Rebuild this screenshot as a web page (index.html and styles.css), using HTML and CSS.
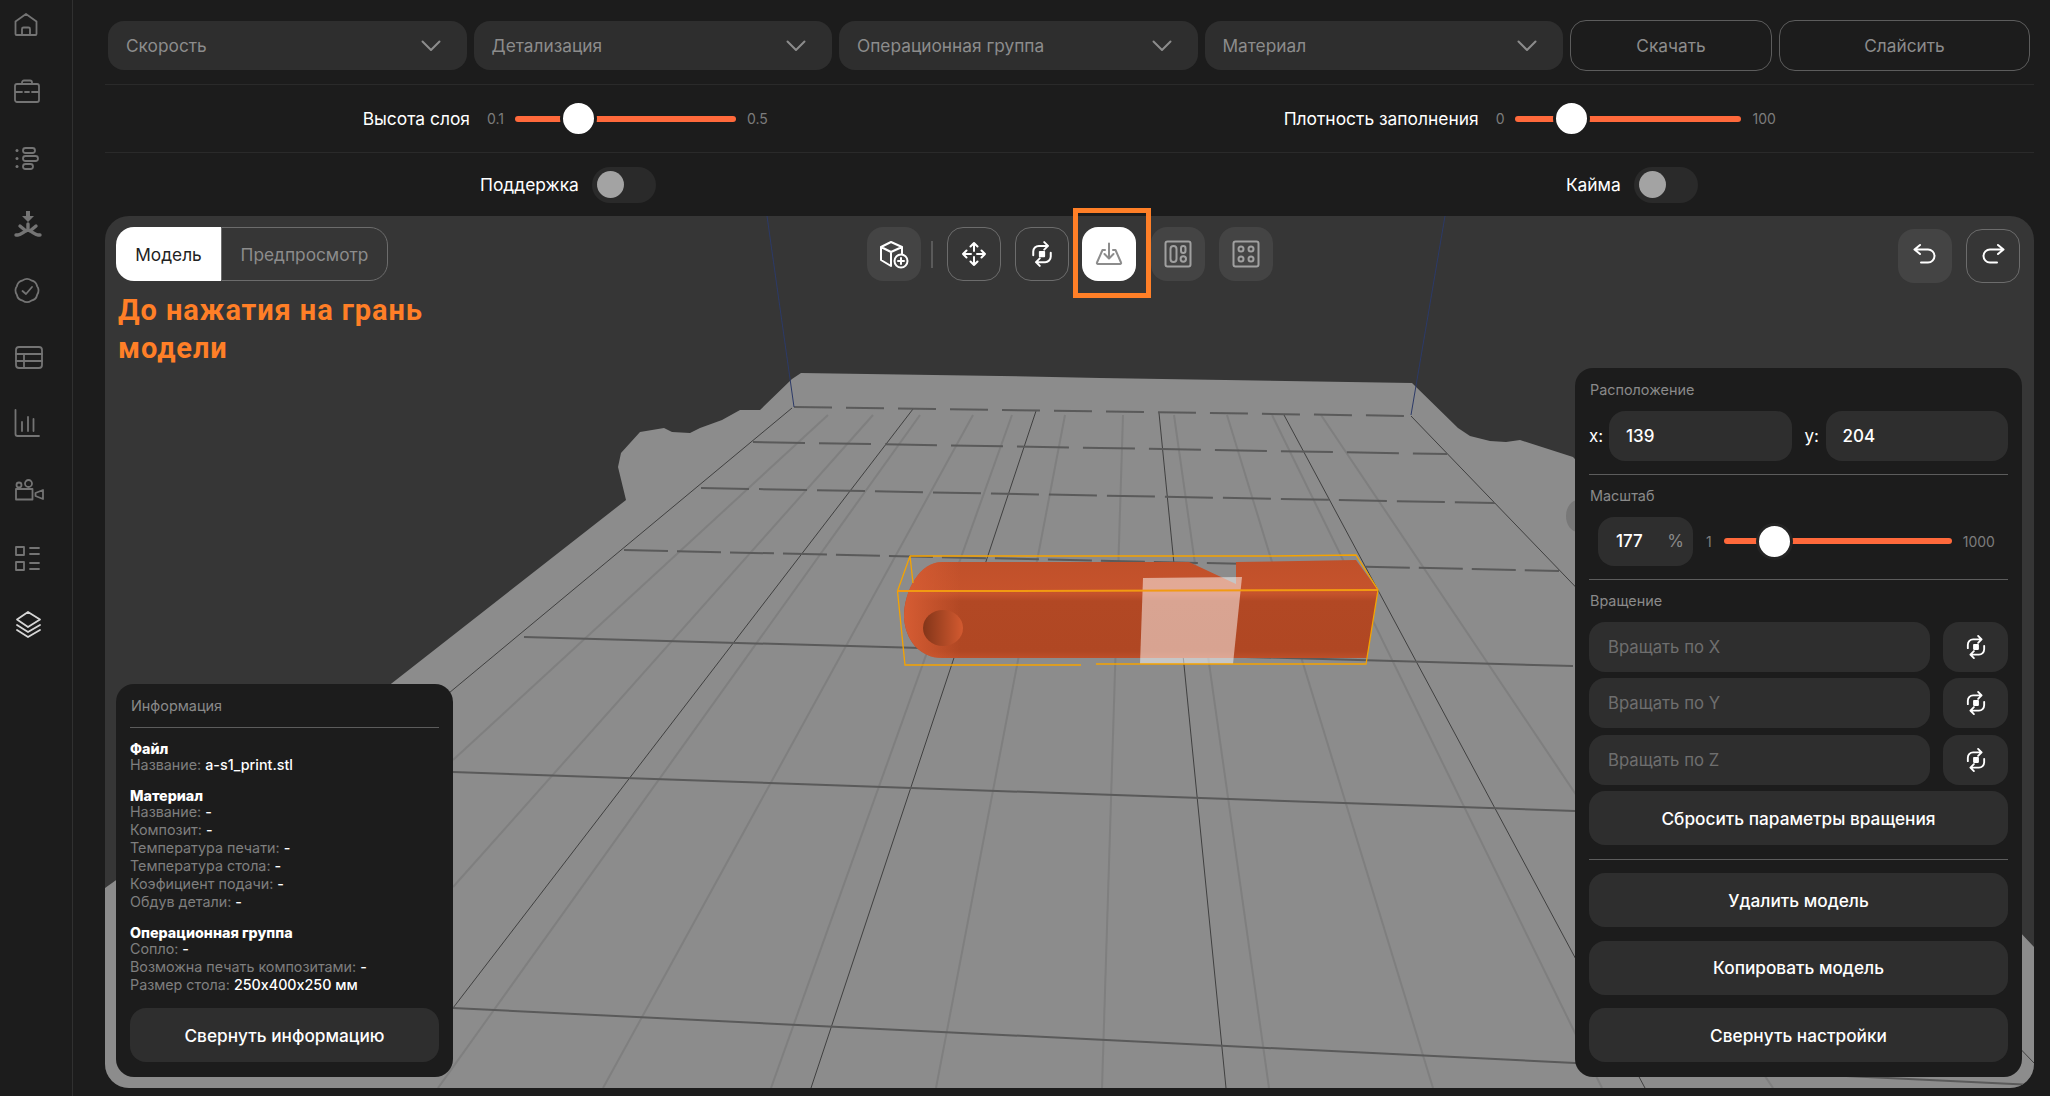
FILE: index.html
```html
<!DOCTYPE html>
<html lang="ru">
<head>
<meta charset="utf-8">
<title>Слайсер</title>
<link rel="stylesheet" href="styles.css">
</head>
<body>
<svg class="defs" width="0" height="0" aria-hidden="true">
  <symbol id="i-rotate" viewBox="0 0 24 24">
    <path d="M5 13V10a4.500 4.500 0 0 1 4.500-4.500H16M13.800 2.500l3 3-3 3M19 11v3a4.500 4.500 0 0 1-4.500 4.500H8M10.200 15.500l-3 3 3 3" fill="none" stroke="currentColor" stroke-width="1.600" stroke-linecap="round" stroke-linejoin="round"/>
    <rect x="9.500" y="9.500" width="5" height="5" rx=".7" fill="currentColor"/>
  </symbol>
  <symbol id="i-chev" viewBox="0 0 20 12">
    <path d="M1.500 1.500 10 10l8.500-8.500" fill="none" stroke="currentColor" stroke-width="2" stroke-linecap="round" stroke-linejoin="round"/>
  </symbol>
</svg>

<div class="app">
  <aside class="sidebar">
    <svg class="nav-icon" viewBox="0 0 34 34"><path d="M5.500 13.500 16 6l10.500 7.500V26a1 1 0 0 1-1 1h-19a1 1 0 0 1-1-1ZM12 27v-6a1.500 1.500 0 0 1 1.500-1.500h5A1.500 1.500 0 0 1 20 21v6"/></svg>
    <svg class="nav-icon" viewBox="0 0 34 34"><path d="M5 11a2 2 0 0 1 2-2h20a2 2 0 0 1 2 2v14a2 2 0 0 1-2 2H7a2 2 0 0 1-2-2ZM12 9V7.500a2 2 0 0 1 2-2h6a2 2 0 0 1 2 2V9M5 17h7M15 17h4M22 17h7"/></svg>
    <svg class="nav-icon" viewBox="0 0 34 34"><circle cx="7" cy="9.500" r="1.500" class="fill"/><circle cx="7" cy="17.500" r="1.500" class="fill"/><circle cx="7" cy="25.500" r="1.500" class="fill"/><rect x="13" y="7" width="12" height="5" rx="2.500"/><rect x="13" y="15" width="15" height="5" rx="2.500"/><rect x="13" y="23" width="10" height="5" rx="2.500"/></svg>
    <svg class="nav-icon" viewBox="0 0 34 34"><path class="fill" d="M16 3h4v5h4l-6 6-6-6h4Z"/><path class="thick" d="M18 16v6M6 27h2c3 0 5-3 10-5 5 2 7 5 10 5h2M10 18l6 5M26 18l-6 5"/></svg>
    <svg class="nav-icon" viewBox="0 0 34 34"><path d="M27.160 20.710Q26.190 25.690 21.210 26.660 17 29.500 12.790 26.660 7.810 25.690 6.840 20.710 4 16.500 6.840 12.290 7.810 7.310 12.790 6.340 17 3.500 21.210 6.340 26.190 7.310 27.160 12.290 30 16.500 27.160 20.710Z"/><path d="m12.500 17 3.500 3 6-7"/></svg>
    <svg class="nav-icon" viewBox="0 0 34 34"><rect x="6" y="6" width="26" height="21" rx="3"/><path d="M6 13h26M6 20h26M14 13v14"/></svg>
    <svg class="nav-icon" viewBox="0 0 34 34"><path d="M5.500 3v24a2 2 0 0 0 2 2H29M12 24v-9M18 24V10M23.500 24v-12"/></svg>
    <svg class="nav-icon" viewBox="0 0 34 34"><circle cx="9" cy="11" r="2.500"/><circle cx="18.500" cy="9.500" r="3.500"/><rect x="6" y="15" width="16.500" height="10.500"/><path d="M25.500 19 33 16v9l-7.500-3Z"/></svg>
    <svg class="nav-icon" viewBox="0 0 34 34"><rect x="6" y="7" width="8" height="8"/><rect x="6" y="22" width="8" height="8"/><path d="M20 8h9M20 14h9M20 23h9M20 29h9"/></svg>
    <svg class="nav-icon is-active" viewBox="0 0 34 34"><path d="M18 5 30 12.500 18 20 7 12.500ZM7 18l11 7 12-7M7 23l11 7 12-7"/></svg>
  </aside>

  <main class="main">
    <div class="top-row">
      <div class="select"><span>Скорость</span><svg class="chev"><use href="#i-chev"/></svg></div>
      <div class="select"><span>Детализация</span><svg class="chev"><use href="#i-chev"/></svg></div>
      <div class="select"><span>Операционная группа</span><svg class="chev"><use href="#i-chev"/></svg></div>
      <div class="select"><span>Материал</span><svg class="chev"><use href="#i-chev"/></svg></div>
      <button class="outline-btn btn-download">Скачать</button>
      <button class="outline-btn btn-slice">Слайсить</button>
    </div>

    <div class="slider-row">
      <div class="slider-cell">
        <span class="param">Высота слоя</span>
        <span class="bound">0.1</span>
        <div class="track track-layer"><i class="thumb thumb-layer"></i></div>
        <span class="bound">0.5</span>
      </div>
      <div class="slider-cell">
        <span class="param">Плотность заполнения</span>
        <span class="bound">0</span>
        <div class="track track-fill"><i class="thumb thumb-fill"></i></div>
        <span class="bound">100</span>
      </div>
    </div>

    <div class="toggle-row">
      <div class="toggle-cell"><span class="param">Поддержка</span><div class="toggle"><i></i></div></div>
      <div class="toggle-cell"><span class="param">Кайма</span><div class="toggle"><i></i></div></div>
    </div>

    <section class="viewport">
      <svg class="scene" viewBox="105 216 1929 872" preserveAspectRatio="none">
        <defs>
          <linearGradient id="bodyGrad" x1="0" y1="0" x2="0" y2="1">
            <stop offset="0" stop-color="#c0502a"/><stop offset=".34" stop-color="#c6532c"/><stop offset=".42" stop-color="#b24824"/><stop offset=".93" stop-color="#b04723"/><stop offset="1" stop-color="#bd4f29"/>
          </linearGradient>
          <linearGradient id="endGrad" x1="0" y1="0" x2="1" y2="0">
            <stop offset="0" stop-color="#d65c33"/><stop offset="1" stop-color="#d65c33" stop-opacity="0"/>
          </linearGradient>
          <linearGradient id="holeGrad" x1="0" y1="0" x2="1" y2="0">
            <stop offset="0" stop-color="#833519"/><stop offset="1" stop-color="#d35a30"/>
          </linearGradient>
        </defs>
        <polygon fill="#8c8c8c" points="801,373 1000,376 1100,378 1412,383 1458,428 1470,436 1490,441 1506,442 1520,440 1573,457 2034,947 2034,1088 105,1088 105,888 387,687 626,500 618,467 621,453 640,432 664,428 672,432 690,433 700,428 722,420 740,410 760,410 792,379"/>
        <ellipse cx="1578" cy="516" rx="12" ry="16" fill="#787878"/>

        <g class="grid-light">
          <path d="M828 415 453 760M873 415 453 887M920 415 438 1088M973 415 603 1088M1012 415 771 1088M1065 415 936 1088M1123 415 1102 1088M1174 415 1269 1088M1227 415 1433 1088M1272 415 1602 1088M1321 415 1773 1088"/>
        </g>
        <g class="grid-dark">
          <path d="M792 408 449 693M913 409 453 1008M1036 411 811 1088M1159 413 1226 1088M1284 415 1645 1088M1411 416 2034 1063"/>
        </g>
        <g class="grid-cross">
          <path stroke-dasharray="38 14" d="M794 407 1411 416"/>
          <path stroke-dasharray="52 14" d="M753 442 1447 454"/>
          <path stroke-dasharray="48 10" d="M701 488 1495 503"/>
          <path stroke-dasharray="44 9" d="M624 550 1559 571"/>
          <path d="M524 637 1573 666M453 772 1575 811M453 1008 1575 1063 2034 1085"/>
        </g>
        <g class="blue-line">
          <path d="M767 216 794 407M1445 216 1411 415"/>
        </g>

        <path fill="url(#bodyGrad)" d="M942 562 1189 562 1236 584V562L1356 560 1378 590 1367 658H942C920 658 905 640 904 617 904 590 920 562 942 562Z"/>
        <path fill="url(#endGrad)" d="M942 562C920 562 904 590 904 617 905 640 920 658 942 658H960V562Z"/>
        <ellipse cx="943" cy="628" rx="20" ry="18" fill="url(#holeGrad)"/>
        <polygon class="overlay" points="1143,578 1242,577 1233,664 1140,664"/>
        <g class="wire">
          <path d="M910 556H1274L1356 555 1378 590 1366 664H1096M1081 665H905L897.500 591 910 556M913 583 910 556"/>
          <path class="wire-front" d="M897.500 591H984L1378 590"/>
        </g>
      </svg>

      <div class="mode-block">
        <div class="tabs">
          <span class="tab tab-on">Модель</span>
          <span class="tab tab-off">Предпросмотр</span>
        </div>
        <p class="note">До нажатия на грань модели</p>
      </div>

      <div class="toolbar">
        <button class="tool tool-fill">
          <svg viewBox="0 0 32 32"><path d="M13 4 24 9v7M13 4 3 9v13l10 6M3 9l10 5 11-5M13 14v14"/><circle cx="23" cy="23" r="6.500"/><path d="M23 20v6M20 23h6"/></svg>
        </button>
        <span class="tool-sep"></span>
        <button class="tool tool-line">
          <svg viewBox="0 0 32 32"><path d="M16 5v8M12.500 8.500 16 5l3.500 3.500M16 27v-8M12.500 23.500 16 27l3.500-3.500M5 16h8M8.500 12.500 5 16l3.500 3.500M27 16h-8M23.500 12.500 27 16l-3.500 3.500"/></svg>
        </button>
        <button class="tool tool-line"><svg class="rot"><use href="#i-rotate"/></svg></button>
        <span class="tool-focus">
          <button class="tool tool-white">
            <svg viewBox="0 0 32 32"><path d="M9.500 12H12M20 12h2.500L28 24.500a1 1 0 0 1-1 1.500H5a1 1 0 0 1-1-1.500L9.500 12M16 5.500V20M11.500 16 16 20.500l4.500-4.500"/></svg>
          </button>
        </span>
        <button class="tool tool-fill">
          <svg class="gray" viewBox="0 0 32 32"><rect x="3.500" y="3.500" width="25" height="25" rx="2"/><rect x="8.500" y="8" width="6" height="16" rx="3"/><rect x="19" y="8" width="4.500" height="7" rx="2.250"/><circle cx="21.300" cy="21" r="2.700"/></svg>
        </button>
        <button class="tool tool-fill">
          <svg class="gray" viewBox="0 0 32 32"><rect x="3.500" y="3.500" width="25" height="25" rx="2"/><circle cx="11" cy="11" r="2.500"/><circle cx="21" cy="11" r="2.500"/><circle cx="11" cy="21" r="2.500"/><circle cx="21" cy="21" r="2.500"/></svg>
        </button>
      </div>

      <div class="history">
        <button class="tool tool-fill"><svg viewBox="0 0 32 32"><path d="M11 5 5.500 9.500 11 14M6 9.500h13a5.500 5.500 0 0 1 0 13h-7"/></svg></button>
        <button class="tool tool-line"><svg viewBox="0 0 32 32"><path d="M21 5l5.500 4.500L21 14M26 9.500H13a5.500 5.500 0 0 0 0 13h7"/></svg></button>
      </div>

      <aside class="panel info-panel">
        <div class="panel-title info-title">Информация</div>
        <div class="info-group">
          <h4>Файл</h4>
          <p>Название: <b>a-s1_print.stl</b></p>
        </div>
        <div class="info-group">
          <h4>Материал</h4>
          <p>Название: <b>-</b></p>
          <p>Композит: <b>-</b></p>
          <p>Температура печати: <b>-</b></p>
          <p>Температура стола: <b>-</b></p>
          <p>Коэфициент подачи: <b>-</b></p>
          <p>Обдув детали: <b>-</b></p>
        </div>
        <div class="info-group">
          <h4>Операционная группа</h4>
          <p>Сопло: <b>-</b></p>
          <p>Возможна печать композитами: <b>-</b></p>
          <p>Размер стола: <b>250x400x250 мм</b></p>
        </div>
        <button class="wide-btn info-btn">Свернуть информацию</button>
      </aside>

      <aside class="panel settings-panel">
        <div class="panel-title">Расположение</div>
        <div class="pos-row">
          <span class="axis">x:</span><div class="field field-pos">139</div>
          <span class="axis axis-y">y:</span><div class="field field-pos">204</div>
        </div>
        <hr class="rule">
        <div class="panel-title">Масштаб</div>
        <div class="scale-row">
          <div class="field field-scale"><span>177</span><em>%</em></div>
          <span class="bound">1</span>
          <div class="track track-scale"><i class="thumb thumb-scale"></i></div>
          <span class="bound">1000</span>
        </div>
        <hr class="rule">
        <div class="panel-title">Вращение</div>
        <div class="rotate-list">
          <div class="rotate-row"><div class="field field-rot">Вращать по X</div><button class="rot-btn"><svg class="rot"><use href="#i-rotate"/></svg></button></div>
          <div class="rotate-row"><div class="field field-rot">Вращать по Y</div><button class="rot-btn"><svg class="rot"><use href="#i-rotate"/></svg></button></div>
          <div class="rotate-row"><div class="field field-rot">Вращать по Z</div><button class="rot-btn"><svg class="rot"><use href="#i-rotate"/></svg></button></div>
          <button class="wide-btn">Сбросить параметры вращения</button>
        </div>
        <hr class="rule rule-actions">
        <div class="actions">
          <button class="wide-btn">Удалить модель</button>
          <button class="wide-btn">Копировать модель</button>
          <button class="wide-btn">Свернуть настройки</button>
        </div>
      </aside>
    </section>
  </main>
</div>
</body>
</html>
```
FILE: styles.css
```css
*, *::before, *::after { box-sizing: border-box; }
html, body { margin: 0; height: 100%; }
body {
  background: #1c1c1c;
  color: #fff;
  font-family: Inter, "Noto Sans", sans-serif;
  font-size: 17.300px;
  font-feature-settings: "calt" 0;
  overflow: hidden;
}
button { font: inherit; font-feature-settings: inherit; color: inherit; border: 0; padding: 0; background: none; }
.defs { position: absolute; }

.app { display: flex; width: 2050px; height: 1096px; }

/* sidebar */
.sidebar {
  width: 73px;
  flex: none;
  border-right: 1px solid #303030;
  padding: 8px 0 0 10px;
  display: flex;
  flex-direction: column;
  gap: 32.500px;
}
.nav-icon {
  width: 34px;
  height: 34px;
  flex: none;
  fill: none;
  stroke: #747474;
  stroke-width: 1.800;
  stroke-linecap: round;
  stroke-linejoin: round;
}
.nav-icon .fill { fill: #747474; stroke: none; }
.nav-icon .thick { stroke-width: 3.400; }
.nav-icon.is-active { stroke: #d6d6d6; }

/* main */
.main { flex: 1; min-width: 0; padding: 0 16px 8px 32px; display: flex; flex-direction: column; }

.top-row {
  height: 85px;
  flex: none;
  padding: 20px 0 13px 3px;
  display: flex;
  align-items: center;
  gap: 7px;
  border-bottom: 1px solid #2a2a2a;
}
.select {
  width: 358.500px;
  height: 49px;
  flex: none;
  background: #2e2e2e;
  border-radius: 16px;
  display: flex;
  align-items: center;
  justify-content: space-between;
  padding: 0 26px 0 18px;
  color: #8c8c8c;
}
.chev { width: 20px; height: 12px; color: #8c8c8c; }
.outline-btn {
  height: 51px;
  flex: none;
  border: 1px solid #5c5c5c;
  border-radius: 16px;
  color: #8c8c8c;
}
.btn-download { width: 202px; }
.btn-slice { width: 251px; }

.slider-row {
  height: 68px;
  flex: none;
  display: grid;
  grid-template-columns: 1fr 1fr;
  align-items: center;
  border-bottom: 1px solid #2a2a2a;
}
.slider-cell { display: flex; align-items: center; justify-content: center; margin-right: 44px; }
.param { font-size: 17.400px; color: #fff; white-space: nowrap; }
.bound { font-size: 14px; color: #7d7d7d; }
.slider-cell .param { margin-right: 17px; }
.slider-cell .bound:last-child { margin-left: 11px; }
.slider-cell .bound:nth-child(2) { margin-right: 11px; }
.track {
  position: relative;
  height: 6px;
  border-radius: 3px;
  background: #ff693b;
}
.track-layer { width: 221px; }
.track-fill { width: 226px; }
.track-scale { width: 228px; }
.thumb {
  position: absolute;
  top: 50%;
  width: 37px;
  height: 37px;
  margin: -18.500px 0 0 -18.500px;
  border-radius: 50%;
  background: #fff;
  border: 3.500px solid #1c1c1c;
}
.thumb-layer { left: 64px; }
.thumb-fill { left: 56px; }
.thumb-scale { left: 51px; border-color: #242424; }

.toggle-row {
  height: 63px;
  flex: none;
  display: flex;
  align-items: center;
  padding-left: 375px;
  gap: 910px;
}
.toggle-cell { display: flex; align-items: center; gap: 13px; }
.toggle {
  width: 64px;
  height: 36px;
  border-radius: 18px;
  background: #2a2a2a;
  padding: 4.500px 5px;
}
.toggle i { display: block; width: 27px; height: 27px; border-radius: 50%; background: #a3a3a3; }

/* viewport */
.viewport {
  position: relative;
  flex: 1;
  min-height: 0;
  background: #363636;
  border-radius: 24px;
}
.scene { position: absolute; inset: 0; width: 100%; height: 100%; display: block; border-radius: 24px; overflow: hidden; }
.grid-light path { fill: none; stroke: #7f7f7f; stroke-width: 2; }
.grid-dark path { fill: none; stroke: #404040; stroke-width: 1; }
.grid-cross path { fill: none; stroke: #5a5a5a; stroke-width: 2; }
.blue-line path { fill: none; stroke: #2c3a68; stroke-width: 1; }
.overlay { fill: #fff; fill-opacity: .5; }
.wire path { fill: none; stroke: #f5a300; stroke-width: 1.300; }
.wire .wire-front { stroke: #f29a12; stroke-width: 2; }

.mode-block { position: absolute; left: 11px; top: 11px; width: 340px; }
.tabs { display: flex; width: 272px; height: 54px; }
.tab { display: flex; align-items: center; justify-content: center; }
.tab-on { width: 105px; background: #fff; color: #222; border-radius: 18px 0 0 18px; }
.tab-off { flex: 1; color: #8c8c8c; border: 1px solid #6c6c6c; border-radius: 0 18px 18px 0; }
.note {
  margin: 10px 0 0 2px;
  font-family: Roboto, sans-serif;
  font-weight: 700;
  font-size: 29px;
  line-height: 38px;
  letter-spacing: .9px;
  color: #ff7f27;
}

.toolbar { position: absolute; left: 762px; top: 11px; display: flex; align-items: center; gap: 14px; }
.tool {
  width: 54px;
  height: 54px;
  flex: none;
  border-radius: 16px;
  display: flex;
  align-items: center;
  justify-content: center;
  color: #fff;
}
.tool svg {
  width: 32px;
  height: 32px;
  fill: none;
  stroke: #fff;
  stroke-width: 2;
  stroke-linecap: round;
  stroke-linejoin: round;
}
.tool svg.gray { stroke: #a0a0a0; }
.tool svg.rot { stroke: none; width: 30px; height: 30px; }
.tool-fill { background: #444; }
.tool-line { border: 1px solid #6c6c6c; }
.tool-white { background: #fff; }
.tool-white svg { stroke: #8c8c8c; }
.tool-sep { width: 2px; height: 27px; background: #5a5a5a; margin-left: -4px; }
.tool-focus {
  position: relative;
  display: block;
  flex: none;
  margin: 0 1px 0 -1px;
}
.tool-focus::after {
  content: "";
  position: absolute;
  left: -9px;
  top: -19px;
  width: 78px;
  height: 90px;
  border: 5px solid #ff7f27;
  pointer-events: none;
}
.history { position: absolute; right: 14px; top: 13px; display: flex; gap: 14px; }

/* panels */
.panel {
  position: absolute;
  bottom: 11px;
  background: #1c1c1c;
  border-radius: 18px;
  font-size: 14.300px;
}
.panel-title { height: 16px; line-height: 16px; font-size: 14.400px; color: #8a8a8a; }
.wide-btn {
  display: block;
  width: 100%;
  height: 54px;
  border-radius: 16px;
  background: #2e2e2e;
  font-size: 17.250px;
  font-weight: 500;
  color: #fff;
}
.rule { margin: 13px 0; border: 0; border-top: 1px solid #5c5c5c; }
.rule-actions { margin-top: 14px; }

.info-panel { left: 11px; width: 337px; padding: 14px 14px 15px; }
.info-title { height: auto; border-bottom: 1px solid #5c5c5c; padding-bottom: 13px; padding-left: 1px; margin-bottom: 13px; box-sizing: content-box; }
.info-group { margin-bottom: 14px; }
.info-group h4 { margin: 0; font-size: 14.300px; line-height: 15px; font-weight: 800; color: #fff; }
.info-group p { margin: 0; font-size: 14.300px; line-height: 18px; color: #7f7f7f; white-space: nowrap; }
.info-group p b { font-weight: 500; color: #fff; }
.info-group:last-of-type { margin-bottom: 0; }
.info-btn { margin-top: 14px; }

.settings-panel { left: 1470px; right: 12px; padding: 14px 14px 15px; }
.settings-panel .panel-title { margin-bottom: 13px; margin-left: 1px; }
.pos-row { display: flex; align-items: center; }
.axis { width: 20px; flex: none; color: #fff; font-size: 17px; }
.axis-y { width: 21px; margin-left: 13px; }
.field {
  background: #2e2e2e;
  border-radius: 16px;
  display: flex;
  align-items: center;
}
.field-pos { flex: 1; height: 50px; padding-left: 17px; font-size: 17px; font-weight: 500; }
.scale-row { display: flex; align-items: center; padding-left: 9px; height: 49px; }
.field-scale { width: 95px; height: 49px; padding: 0 9px 0 18px; justify-content: space-between; font-size: 17px; font-weight: 500; flex: none; }
.field-scale em { font-style: normal; color: #8a8a8a; font-weight: 400; }
.scale-row .bound:nth-child(2) { margin: 0 12px 0 13px; }
.scale-row .bound:last-child { margin-left: 11px; }
.rotate-list { display: flex; flex-direction: column; gap: 6.500px; }
.rotate-row { display: flex; gap: 13px; }
.field-rot { flex: 1; height: 50px; padding-left: 19px; color: #6e6e6e; font-size: 16.700px; }
.rot-btn {
  width: 65px;
  height: 50px;
  flex: none;
  border-radius: 16px;
  background: #2e2e2e;
  display: flex;
  align-items: center;
  justify-content: center;
  color: #fff;
}
.rot-btn svg { width: 28px; height: 28px; }
.actions { display: flex; flex-direction: column; gap: 13.500px; }
```
